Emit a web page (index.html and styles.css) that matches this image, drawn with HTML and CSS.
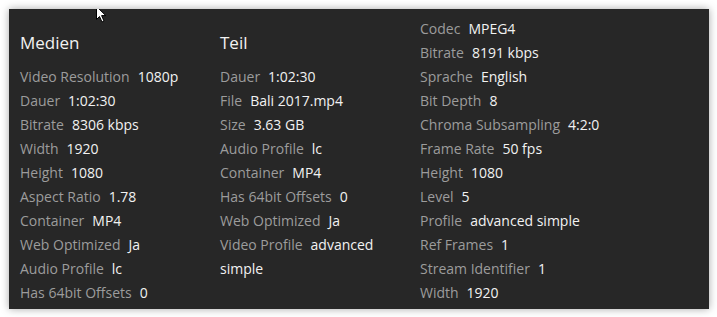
FILE: index.html
```html
<!DOCTYPE html>
<html>
<head>
<meta charset="utf-8">
<link rel="stylesheet" href="styles.css">
</head>
<body>
<div class="panel">
  <div class="col">
    <h2 class="title">Medien</h2>
    <div class="row"><span class="k">Video Resolution</span><span class="v">1080p</span></div>
    <div class="row"><span class="k">Dauer</span><span class="v">1:02:30</span></div>
    <div class="row"><span class="k">Bitrate</span><span class="v">8306 kbps</span></div>
    <div class="row"><span class="k">Width</span><span class="v">1920</span></div>
    <div class="row"><span class="k">Height</span><span class="v">1080</span></div>
    <div class="row"><span class="k">Aspect Ratio</span><span class="v">1.78</span></div>
    <div class="row"><span class="k">Container</span><span class="v">MP4</span></div>
    <div class="row"><span class="k">Web Optimized</span><span class="v">Ja</span></div>
    <div class="row"><span class="k">Audio Profile</span><span class="v">lc</span></div>
    <div class="row"><span class="k">Has 64bit Offsets</span><span class="v">0</span></div>
  </div>
  <div class="col">
    <h2 class="title">Teil</h2>
    <div class="row"><span class="k">Dauer</span><span class="v">1:02:30</span></div>
    <div class="row"><span class="k">File</span><span class="v">Bali 2017.mp4</span></div>
    <div class="row"><span class="k">Size</span><span class="v">3.63 GB</span></div>
    <div class="row"><span class="k">Audio Profile</span><span class="v">lc</span></div>
    <div class="row"><span class="k">Container</span><span class="v">MP4</span></div>
    <div class="row"><span class="k">Has 64bit Offsets</span><span class="v">0</span></div>
    <div class="row"><span class="k">Web Optimized</span><span class="v">Ja</span></div>
    <div class="row"><span class="k">Video Profile</span><span class="v">advanced simple</span></div>
  </div>
  <div class="col">
    <div class="row"><span class="k">Codec</span><span class="v">MPEG4</span></div>
    <div class="row"><span class="k">Bitrate</span><span class="v">8191 kbps</span></div>
    <div class="row"><span class="k">Sprache</span><span class="v">English</span></div>
    <div class="row"><span class="k">Bit Depth</span><span class="v">8</span></div>
    <div class="row"><span class="k">Chroma Subsampling</span><span class="v">4:2:0</span></div>
    <div class="row"><span class="k">Frame Rate</span><span class="v">50 fps</span></div>
    <div class="row"><span class="k">Height</span><span class="v">1080</span></div>
    <div class="row"><span class="k">Level</span><span class="v">5</span></div>
    <div class="row"><span class="k">Profile</span><span class="v">advanced simple</span></div>
    <div class="row"><span class="k">Ref Frames</span><span class="v">1</span></div>
    <div class="row"><span class="k">Stream Identifier</span><span class="v">1</span></div>
    <div class="row"><span class="k">Width</span><span class="v">1920</span></div>
  </div>
  <svg class="cursor" width="12" height="18" viewBox="0 0 12 18">
    <path d="M0.5 0.5 L0.5 13.5 L3.5 10.5 L6 16 L8 15 L5.6 9.6 L9.8 9.6 Z" fill="#fff" stroke="#000" stroke-width="1"/>
  </svg>
</div>
</body>
</html>
```
FILE: styles.css
```css
html, body {
  margin: 0;
  padding: 0;
  background: #ffffff;
}
body {
  padding: 9px;
  font-family: "Open Sans", "DejaVu Sans", sans-serif;
}
.panel {
  position: relative;
  width: 700px;
  height: 300px;
  box-sizing: border-box;
  background: #272727;
  box-shadow: 0 0 8px rgba(0, 0, 0, 0.35);
  display: grid;
  grid-template-columns: 200px 200px 200px;
  padding: 8px 0 0 11px;
  overflow: hidden;
}
.col {
  display: flex;
  flex-direction: column;
}
.title {
  margin: 14px 0 10px;
  font-size: 17px;
  line-height: 24px;
  font-weight: 400;
  color: #f2f2f2;
}
.row {
  font-size: 14px;
  line-height: 24px;
  padding-right: 12px;
}
.k {
  color: #9c9c9c;
  margin-right: 8px;
}
.v {
  color: #f2f2f2;
}
.cursor {
  position: absolute;
  left: 87px;
  top: -3px;
}
```
